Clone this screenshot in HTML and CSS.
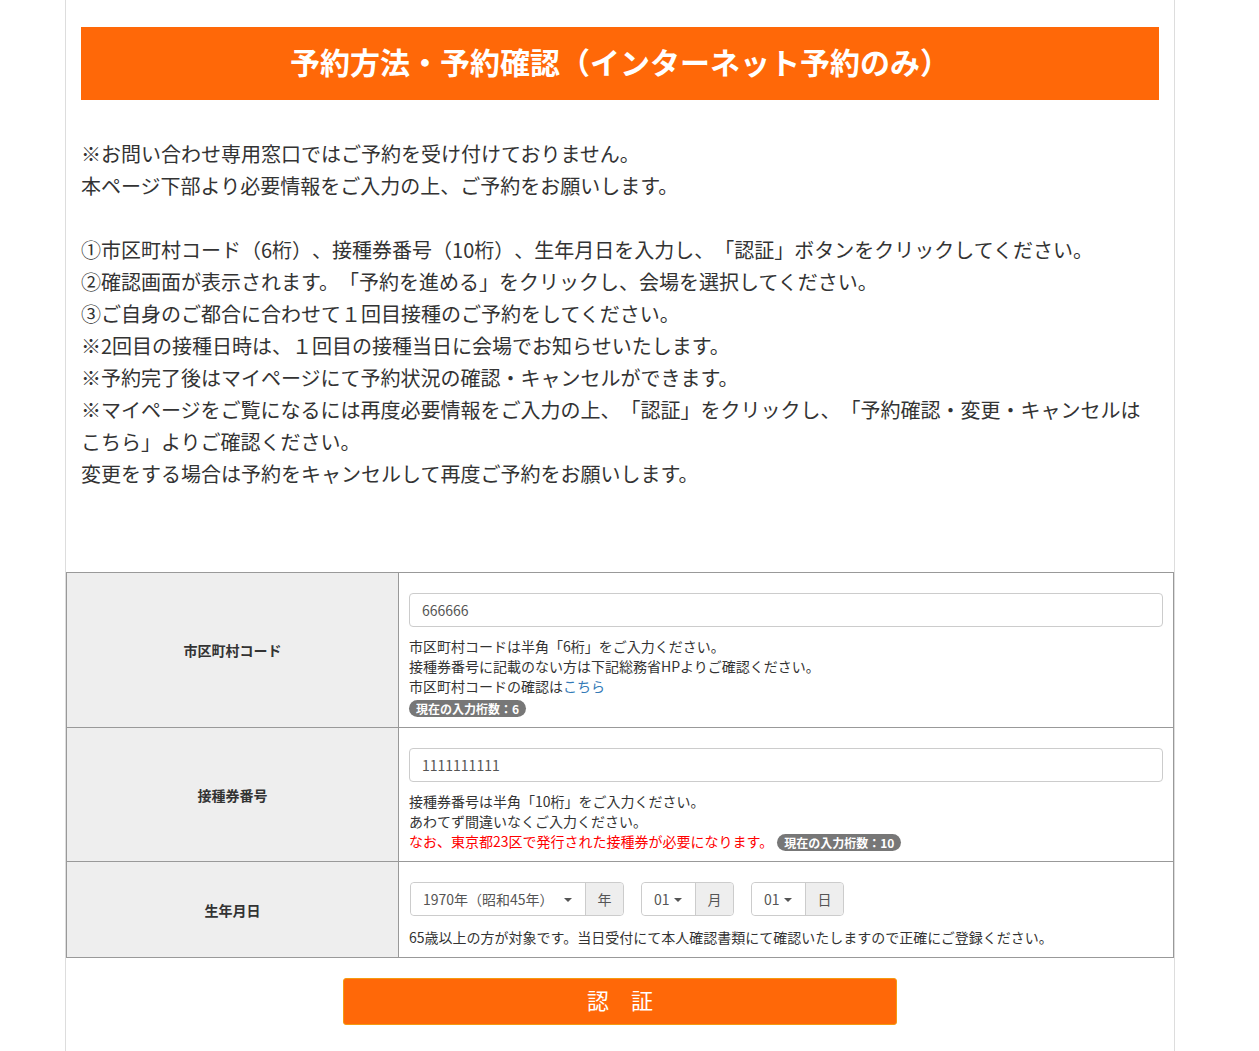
FILE: index.html
```html
<!DOCTYPE html>
<html lang="ja">
<head>
  <meta charset="UTF-8">
  <meta name="viewport" content="width=device-width, initial-scale=1.0">
  <title>予約方法・予約確認</title>
  <link rel="stylesheet" href="styles.css">
</head>
<body>
  <div class="container">
    <div class="intro">
      <h1 class="title">予約方法・予約確認（インターネット予約のみ）</h1>
      <p class="lead">
        ※お問い合わせ専用窓口ではご予約を受け付けておりません。<br>
        本ページ下部より必要情報をご入力の上、ご予約をお願いします。<br>
        <br>
        ①市区町村コード（6桁）、接種券番号（10桁）、生年月日を入力し、「認証」ボタンをクリックしてください。<br>
        ②確認画面が表示されます。「予約を進める」をクリックし、会場を選択してください。<br>
        ③ご自身のご都合に合わせて１回目接種のご予約をしてください。<br>
        ※2回目の接種日時は、１回目の接種当日に会場でお知らせいたします。<br>
        ※予約完了後はマイページにて予約状況の確認・キャンセルができます。<br>
        ※マイページをご覧になるには再度必要情報をご入力の上、「認証」をクリックし、「予約確認・変更・キャンセルはこちら」よりご確認ください。<br>
        変更をする場合は予約をキャンセルして再度ご予約をお願いします。
      </p>
    </div>

    <form class="auth-form" onsubmit="return false;">
      <table class="form-table">
        <tr class="row-city">
          <th>市区町村コード</th>
          <td>
            <input class="text-input" type="text" value="666666">
            <div class="help">
              市区町村コードは半角「6桁」をご入力ください。<br>
              接種券番号に記載のない方は下記総務省HPよりご確認ください。<br>
              市区町村コードの確認は<a href="#">こちら</a><br>
              <span class="badge">現在の入力桁数：6</span>
            </div>
          </td>
        </tr>
        <tr class="row-ticket">
          <th>接種券番号</th>
          <td>
            <input class="text-input" type="text" value="1111111111">
            <div class="help">
              接種券番号は半角「10桁」をご入力ください。<br>
              あわてず間違いなくご入力ください。<br>
              <span class="warn">なお、東京都23区で発行された接種券が必要になります。</span><span class="badge">現在の入力桁数：10</span>
            </div>
          </td>
        </tr>
        <tr class="row-birth">
          <th>生年月日</th>
          <td>
            <div class="date-row">
              <div class="input-group year">
                <div class="fake-select">1970年（昭和45年）</div>
                <span class="addon">年</span>
              </div>
              <div class="input-group">
                <div class="fake-select">01</div>
                <span class="addon">月</span>
              </div>
              <div class="input-group">
                <div class="fake-select">01</div>
                <span class="addon">日</span>
              </div>
            </div>
            <div class="help">65歳以上の方が対象です。当日受付にて本人確認書類にて確認いたしますので正確にご登録ください。</div>
          </td>
        </tr>
      </table>
      <div class="actions">
        <button type="submit" class="btn-auth">認　証</button>
      </div>
    </form>
  </div>
</body>
</html>
```

FILE: styles.css
```css
html, body {
  margin: 0;
  padding: 0;
  background-color: #fff;
}

body {
  font-family: "Noto Sans CJK JP", "Noto Sans", sans-serif;
  color: #333;
  text-spacing-trim: space-all;
  /* room the original page kept for its scrollbar */
  padding-right: 19px;
}

.container {
  width: 1108px;
  margin: 0 auto;
  min-height: 1200px;
  border-left: 1px solid #ddd;
  border-right: 1px solid #ddd;
  background-color: #fff;
}

.intro {
  padding: 27px 15px 0;
}

.title {
  margin: 0;
  height: 73px;
  line-height: 68px;
  background-color: #ff6808;
  color: #fff;
  font-size: 30px;
  font-weight: bold;
  text-align: center;
}

.lead {
  margin: 38px 0 0;
  font-size: 20px;
  line-height: 32px;
  color: #333;
}

.auth-form {
  margin-top: 82px;
}

.form-table {
  width: 100%;
  border-collapse: collapse;
}

.form-table th,
.form-table td {
  border: 1px solid #999;
  padding: 10px;
}

.form-table th {
  width: 311px;
  background-color: #eee;
  font-size: 14px;
  font-weight: bold;
  color: #333;
  text-align: center;
  vertical-align: middle;
}

.form-table td {
  vertical-align: top;
}

.text-input {
  display: block;
  box-sizing: border-box;
  width: 100%;
  height: 34px;
  margin: 10px 0 9px;
  padding: 6px 12px;
  border: 1px solid #ccc;
  border-radius: 4px;
  font-family: inherit;
  font-size: 14px;
  color: #555;
  background-color: #fff;
}

.help {
  font-size: 14px;
  line-height: 20px;
  color: #333;
}

.help a {
  color: #337ab7;
  text-decoration: none;
}

.warn {
  color: #f00;
}

.badge {
  display: inline-block;
  padding: 0 7px;
  line-height: 17px;
  border-radius: 10px;
  background-color: #777;
  color: #fff;
  font-size: 12px;
  font-weight: bold;
  vertical-align: middle;
}

.warn + .badge {
  margin-left: 4px;
}

.date-row {
  display: flex;
  gap: 17px;
  margin: 10px 0 11px 1px;
}

.input-group {
  display: flex;
  height: 34px;
  box-sizing: border-box;
  border: 1px solid #ccc;
  border-radius: 4px;
  font-size: 14px;
  color: #555;
}

.fake-select {
  position: relative;
  box-sizing: border-box;
  display: flex;
  align-items: center;
  width: 53px;
  padding: 0 0 0 12px;
  background-color: #fff;
  border-radius: 4px 0 0 4px;
}

.fake-select::after {
  content: "";
  position: absolute;
  right: 13px;
  top: 15px;
  border-left: 4px solid transparent;
  border-right: 4px solid transparent;
  border-top: 4px solid #555;
}

.year .fake-select {
  width: 174px;
}

.addon {
  display: flex;
  align-items: center;
  justify-content: center;
  width: 37px;
  border-left: 1px solid #ccc;
  background-color: #eee;
  border-radius: 0 4px 4px 0;
}

.actions {
  padding: 20px 0;
  text-align: center;
}

.btn-auth {
  width: 554px;
  height: 47px;
  padding: 0 0 5px;
  border: 1px solid #f59a10;
  border-radius: 3px;
  background-color: #ff6808;
  color: #fff;
  font-family: inherit;
  font-size: 22px;
  cursor: pointer;
}
```
